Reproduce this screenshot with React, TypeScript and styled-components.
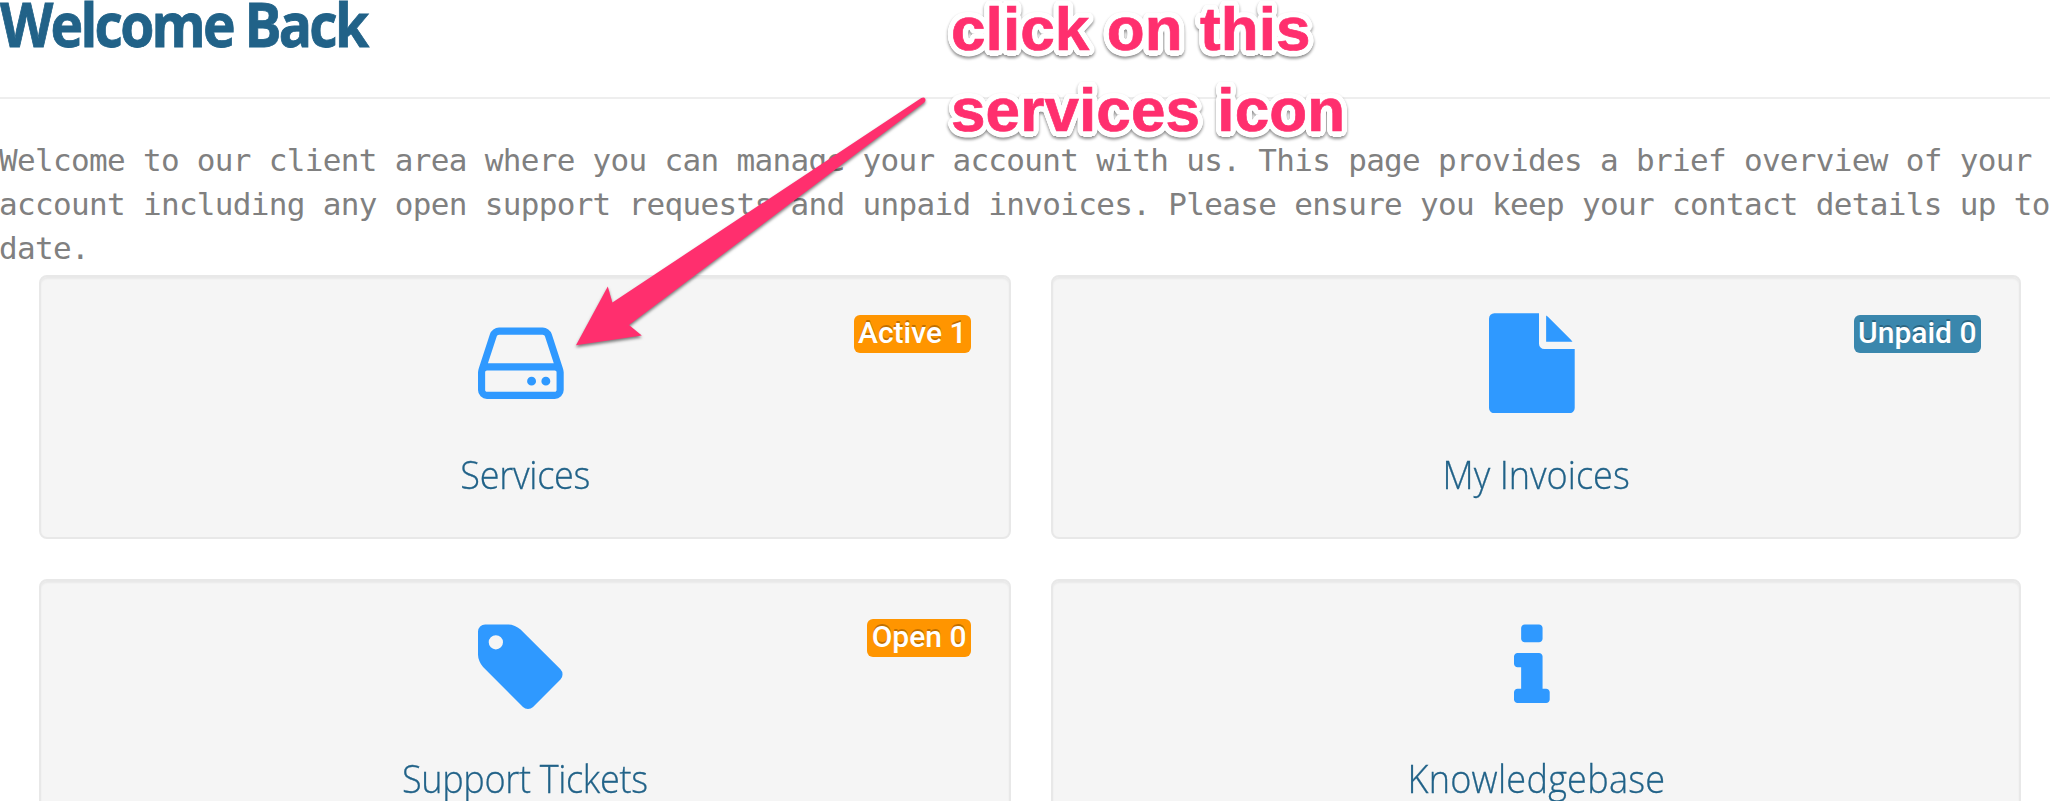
import React from 'react';
import styled, { createGlobalStyle } from 'styled-components';

const GlobalStyle = createGlobalStyle`
  *, *::before, *::after { box-sizing: border-box; }
  body { margin: 0; background: #fff; overflow: hidden; }
`;

const Page = styled.main`
  position: relative;
  width: 100%;
  height: 801px;
  overflow: hidden;
  background: #fff;
`;

const PageHeader = styled.header`
  height: 99px;
  border-bottom: 2px solid #eee;
`;

const Heading = styled.h1`
  margin: 0;
  font: 700 60px/48px 'Open Sans', 'Noto Sans', sans-serif;
  letter-spacing: -3px;
  color: #216288;
  -webkit-text-stroke: 0.8px #216288;
  white-space: nowrap;
  transform: scaleX(0.92);
  transform-origin: left;
`;

const Intro = styled.p`
  margin: 39px 0 5px -1px;
  font: 400 31px/44px 'DejaVu Sans Mono', monospace;
  letter-spacing: -0.675px;
  color: #808080;
  white-space: nowrap;
`;

const CardGrid = styled.section`
  display: grid;
  grid-template-columns: 972px 1fr;
  gap: 40px;
  padding: 0 29px 0 39px;
`;

const Card = styled.a`
  position: relative;
  display: flex;
  flex-direction: column;
  align-items: center;
  height: 264px;
  padding-top: 36px;
  border: 2px solid #e8e8e8;
  border-radius: 8px;
  background: #f5f5f5;
  box-shadow: inset 0 2px 2px rgba(0, 0, 0, 0.05);
  color: #216288;
  text-decoration: none;
`;

const Badge = styled.span<{ $tone: string }>`
  position: absolute;
  top: 38px;
  right: 38px;
  height: 38px;
  padding: 0 4.5px;
  border-radius: 6px;
  background: ${(p) => p.$tone};
  color: #fff;
  font: 500 30px/35px Roboto, sans-serif;
  text-shadow: 0 -2px 0 rgba(0, 0, 0, 0.25);
  white-space: nowrap;
`;

const Glyph = styled.svg`
  display: block;
  height: 100px;
  margin: 0 8px 39px 0;
  fill: #2f99ff;
`;

const CardTitle = styled.span<{ $tracking: number }>`
  font: 300 39px/44px 'Open Sans', 'Noto Sans', sans-serif;
  letter-spacing: ${(p) => p.$tracking}px;
  -webkit-text-stroke: 0.3px #216288;
  white-space: nowrap;
  transform: scaleX(0.925);
`;

const Arrow = styled.svg`
  position: absolute;
  left: 560px;
  top: 80px;
  width: 380px;
  height: 280px;
  fill: #ff2f6e;
  filter: drop-shadow(0 2px 1.5px rgba(0, 0, 0, 0.5));
`;

/* White halo: a ring of hard shadows gives the outline round corners. */
const halo = Array.from({ length: 32 }, (_, i) => {
  const a = (i / 32) * 2 * Math.PI;
  return `${(5.5 * Math.cos(a)).toFixed(2)}px ${(5.5 * Math.sin(a)).toFixed(2)}px 0 #fff`;
}).join(', ');

const Callout = styled.div`
  position: absolute;
  left: 951px;
  top: -12px;
  font: 700 62px/81px 'Liberation Sans', Arial, sans-serif;
  letter-spacing: 0.1px;
  color: #ff2f6e;
  white-space: nowrap;
  -webkit-text-stroke: 0.7px #ff2f6e;
  text-shadow: ${halo};
  filter: drop-shadow(0 2px 1.5px rgba(0, 0, 0, 0.45));
`;

type Icon = { advance: number; path: string };

/* Glyph outlines on a 1792-unit em, y axis pointing up. */
const icons: Record<string, Icon> = {
  drive: {
    advance: 1536,
    path: 'M1040 320q0 -33 -23.5 -56.5t-56.5 -23.5t-56.5 23.5t-23.5 56.5t23.5 56.5t56.5 23.5t56.5 -23.5t23.5 -56.5zM1296 320q0 -33 -23.5 -56.5t-56.5 -23.5t-56.5 23.5t-23.5 56.5t23.5 56.5t56.5 23.5t56.5 -23.5t23.5 -56.5zM1408 160v320q0 13 -9.5 22.5t-22.5 9.5h-1216q-13 0 -22.5 -9.5t-9.5 -22.5v-320q0 -13 9.5 -22.5t22.5 -9.5h1216q13 0 22.5 9.5t9.5 22.5zM178 640h1180l-157 482q-4 13 -16 21.5t-26 8.5h-782q-14 0 -26 -8.5t-16 -21.5zM1536 480v-320q0 -66 -47 -113t-113 -47h-1216q-66 0 -113 47t-47 113v320q0 25 16 75l197 606q17 53 63 86t101 33h782q55 0 101 -33t63 -86l197 -606q16 -50 16 -75z',
  },
  file: {
    advance: 1536,
    path: 'M1024 1024v472q22 -14 36 -28l408 -408q14 -14 28 -36h-472zM896 992q0 -40 28 -68t68 -28h544v-1056q0 -40 -28 -68t-68 -28h-1344q-40 0 -68 28t-28 68v1600q0 40 28 68t68 28h800v-544z',
  },
  tag: {
    advance: 1536,
    path: 'M448 1088q0 53 -37.5 90.5t-90.5 37.5t-90.5 -37.5t-37.5 -90.5t37.5 -90.5t90.5 -37.5t90.5 37.5t37.5 90.5zM1515 512q0 -53 -37 -90l-491 -492q-39 -37 -91 -37q-53 0 -90 37l-715 716q-38 37 -64.5 101t-26.5 117v416q0 52 38 90t90 38h416q53 0 117 -26.5t102 -64.5l715 -714q37 -39 37 -91z',
  },
  info: {
    advance: 640,
    path: 'M640 192v-128q0 -26 -19 -45t-45 -19h-512q-26 0 -45 19t-19 45v128q0 26 19 45t45 19h64v384h-64q-26 0 -45 19t-19 45v128q0 26 19 45t45 19h384q26 0 45 -19t19 -45v-576h64q26 0 45 -19t19 -45zM512 1344v-192q0 -26 -19 -45t-45 -19h-256q-26 0 -45 19t-19 45v192q0 26 19 45t45 19h256q26 0 45 -19t19 -45z',
  },
};

const cards = [
  { title: 'Services', icon: 'drive', tracking: -0.3, badge: 'Active 1', tone: '#ff9500' },
  { title: 'My Invoices', icon: 'file', tracking: 0, badge: 'Unpaid 0', tone: '#3a87ad' },
  { title: 'Support Tickets', icon: 'tag', tracking: -0.38, badge: 'Open 0', tone: '#ff9500' },
  { title: 'Knowledgebase', icon: 'info', tracking: 0.27 },
];

function CardIcon({ name }: { name: string }) {
  const { advance, path } = icons[name];
  return (
    <Glyph viewBox={`0 -1541 ${advance} 1792`} width={advance / 17.92} aria-hidden>
      <path transform="scale(1 -1)" d={path} />
    </Glyph>
  );
}

export default function App() {
  return (
    <>
      <GlobalStyle />
      <Page>
        <PageHeader>
          <Heading>Welcome Back</Heading>
        </PageHeader>
        <Intro>
          Welcome to our client area where you can manage your account with us. This page provides a brief overview of your
          <br />
          account including any open support requests and unpaid invoices. Please ensure you keep your contact details up to
          <br />
          date.
        </Intro>
        <CardGrid>
          {cards.map((c) => (
            <Card key={c.title}>
              {c.badge && <Badge $tone={c.tone!}>{c.badge}</Badge>}
              <CardIcon name={c.icon} />
              <CardTitle $tracking={c.tracking}>{c.title}</CardTitle>
            </Card>
          ))}
        </CardGrid>
        <Arrow viewBox="560 80 380 280" aria-hidden>
          <path d="M576 345.3L607.8 286.5L612.4 302.4L921.3 98Q924 96.5 925.3 98.8Q926 101 924.3 102.5L629 325L641.8 335.4Z" />
        </Arrow>
        <Callout>
          click on this
          <br />
          services icon
        </Callout>
      </Page>
    </>
  );
}
